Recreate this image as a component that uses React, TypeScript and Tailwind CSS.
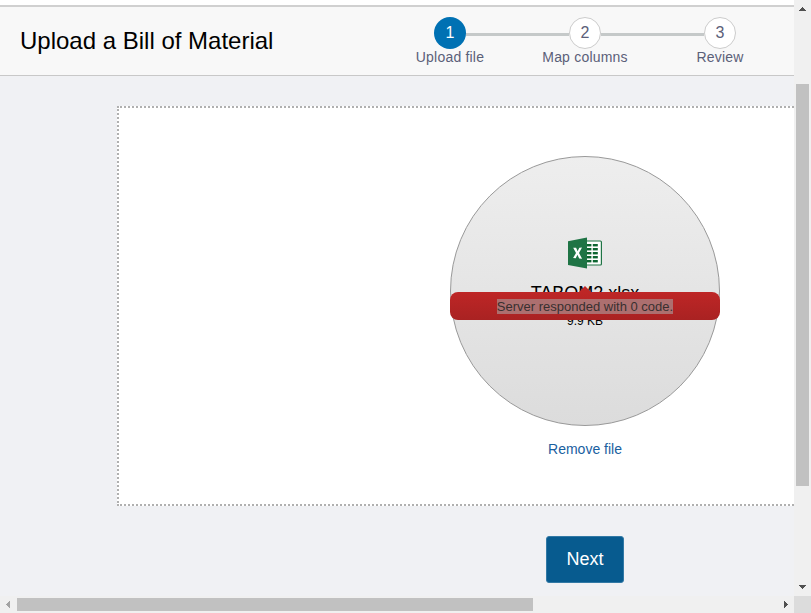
const steps = ['Upload file', 'Map columns', 'Review'];

function Header() {
  return (
    <header className="flex h-[71px] w-full border-t-2 border-b border-t-[#d0d0d0] border-b-[#c8c8c8] bg-[#f8f8f8]">
      <h1 className="w-[382px] shrink-0 pt-[16px] pl-[20px] text-[24px] leading-[36px] text-black">
        Upload a Bill of Material
      </h1>
      <ol className="flex pt-[10px]">
        {steps.map((label, i) => (
          <li key={label} className="flex w-[136px] flex-col items-center not-first:-ml-px">
            <div className="flex w-full items-center">
              <span className={i > 0 ? 'mt-[3px] h-[3px] flex-1 bg-[#c5c9c9]' : 'h-[3px] flex-1'} />
              <span
                className={
                  i === 0
                    ? 'flex size-8 items-center justify-center rounded-full bg-[#0071b3] text-[16px] leading-none text-white'
                    : 'flex size-8 items-center justify-center rounded-full border border-[#ccc] bg-white text-[16px] leading-none text-[#5b6079]'
                }
              >
                {i + 1}
              </span>
              <span className={i < 2 ? 'mt-[3px] h-[3px] flex-1 bg-[#c5c9c9]' : 'h-[3px] flex-1'} />
            </div>
            <span className="text-[14px] leading-4 tracking-[0.2px] text-[#5b6079]">{label}</span>
          </li>
        ))}
      </ol>
    </header>
  );
}

function ExcelIcon() {
  return (
    <svg width="34" height="32" viewBox="0 0 34 32" className="block">
      <rect x="18" y="4" width="15.4" height="24" rx="1" fill="#fff" stroke="#1f7445" strokeWidth="1.2" />
      <g fill="#0d6530">
        {[7, 11, 15, 19, 23].map((y) => (
          <g key={y}>
            <rect x="18" y={y} width="5.4" height="2.4" />
            <rect x="24.8" y={y} width="5" height="2.4" />
          </g>
        ))}
      </g>
      <path d="M0 4.2L19 .5v31L0 28z" fill="#1f7445" />
      <path d="M5.2 10.8h2.9l1.5 3.4 1.7-3.5 2.7-.2-3 5.5 3.1 5.7-2.9-.2-1.8-3.7-1.6 3.5-2.7-.2 2.9-5.1z" fill="#fff" />
    </svg>
  );
}

function FilePreview() {
  return (
    <div className="relative flex size-[270px] flex-col items-center rounded-full border border-[#999] bg-linear-to-b from-[#eee] to-[#dcdcdc] pt-[80px] text-black">
      <ExcelIcon />
      <span className="mt-[14px] text-[18px] leading-5">TABOM2.xlsx</span>
      <span className="mt-[10px] text-[12px] leading-4">9.9 KB</span>
      <div className="absolute top-[135px] -left-px flex h-7 w-[270px] items-center justify-center rounded-lg bg-linear-to-b from-[#be2626] to-[#a92222] text-[13px]">
        <span className="absolute -top-[6px] border-x-[6px] border-b-[6px] border-x-transparent border-b-[#be2626]" />
        <span className="bg-[#ad6f6f] leading-[15px] text-[#383030]">Server responded with 0 code.</span>
      </div>
    </div>
  );
}

function VerticalScrollbar() {
  return (
    <div className="flex h-[596px] w-[17px] flex-col items-center bg-[#f0f0f0]">
      <svg width="17" height="17" shapeRendering="crispEdges">
        <path d="M8 7h1v1h1v1h1v1h1v1H5v-1h1V9h1V8h1z" fill="#505050" />
      </svg>
      <div className="mt-[67px] h-[402px] w-[13px] bg-[#c1c1c1]" />
      <svg width="17" height="17" className="mt-auto" shapeRendering="crispEdges">
        <path d="M5 6h7v1h-1v1h-1v1H9v1H8V9H7V8H6V7H5z" fill="#505050" />
      </svg>
    </div>
  );
}

function HorizontalScrollbar() {
  return (
    <div className="flex h-[17px] w-full bg-[#f0f0f0]">
      <svg width="17" height="17" shapeRendering="crispEdges">
        <path d="M6 8h1V7h1V6h1V5h1v7H9v-1H8v-1H7V9H6z" fill="#a3a3a3" />
      </svg>
      <div className="mt-[2px] h-[13px] w-[516px] bg-[#c1c1c1]" />
      <svg width="17" height="17" className="ml-auto" shapeRendering="crispEdges">
        <path d="M7 5h1v1h1v1h1v1h1v1h-1v1H9v1H8v1H7z" fill="#505050" />
      </svg>
      <div className="w-[17px] bg-[#dcdcdc]" />
    </div>
  );
}

export default function App() {
  return (
    <div className="h-[613px] w-[811px] overflow-hidden font-['Liberation_Sans',Arial,sans-serif]">
      <div className="flex h-[596px]">
        <div className="h-[596px] w-[794px] overflow-hidden bg-[#f0f1f4]">
          <div className="flex w-[1170px] flex-col items-center">
            <div className="h-[5px] w-full bg-white" />
            <Header />
            <main className="mt-[30px] flex h-[400px] w-[936px] flex-col items-center border-2 border-dotted border-[#b0b0b0] bg-white pt-[48px]">
              <FilePreview />
              <a className="mt-[13px] text-[14px] leading-5 text-[#19609f]">Remove file</a>
            </main>
            <button className="mt-[30px] h-[47px] w-[78px] rounded-[3px] border border-[#3279a5] bg-[#075b8f] pb-[2px] text-[18px] leading-none text-white">
              Next
            </button>
          </div>
        </div>
        <VerticalScrollbar />
      </div>
      <HorizontalScrollbar />
    </div>
  );
}
